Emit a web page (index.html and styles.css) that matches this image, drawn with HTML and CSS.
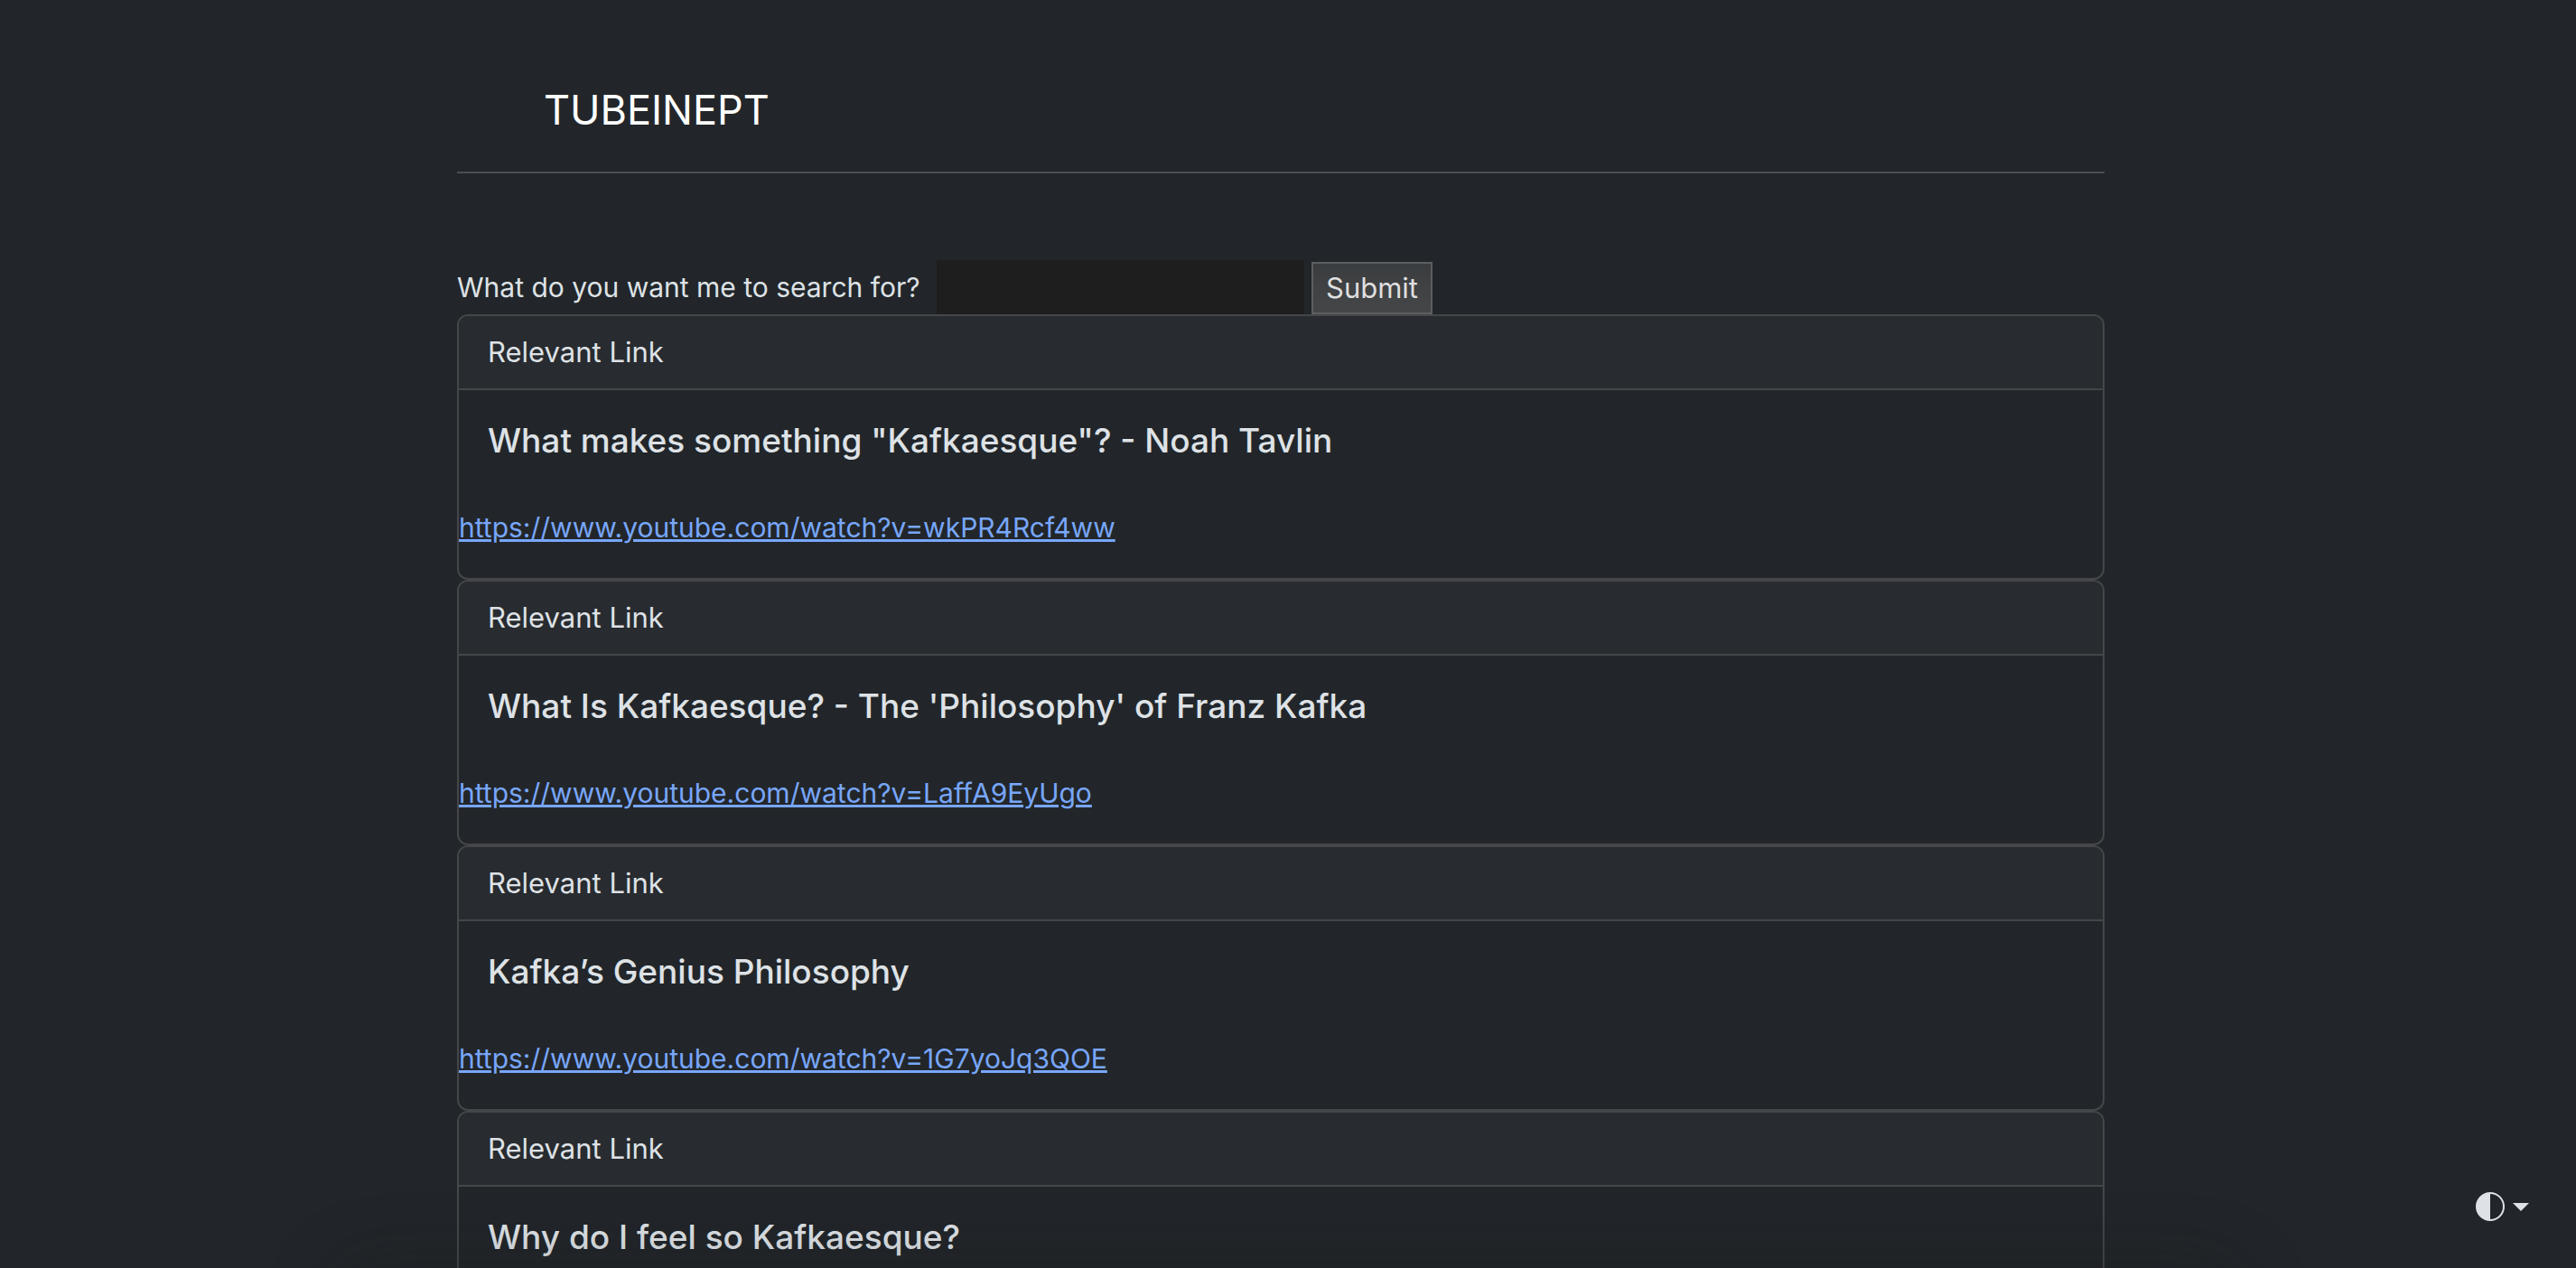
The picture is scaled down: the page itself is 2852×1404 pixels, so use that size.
FILE: index.html
```
<!DOCTYPE html>
<html lang="en" data-bs-theme="dark">
  <head>
    <meta charset="UTF-8" />
    <meta name="viewport" content="width=device-width, initial-scale=1" />
    <title>Tubeinept</title>
    <link rel="stylesheet" href="styles.css">
  </head>
  <body>
    <div class="theme-toggle">
      <button type="button" class="theme-button" aria-label="Toggle theme">
        <svg class="theme-icon" viewBox="0 0 16 16" fill="currentColor" aria-hidden="true">
          <path d="M8 15A7 7 0 1 0 8 1v14zm0 1A8 8 0 1 1 8 0a8 8 0 0 1 0 16z" />
        </svg>
        <span class="caret"></span>
      </button>
    </div>

    <div class="wrapper">
      <header class="site-header">
        <a class="brand" href="/">TUBEINEPT</a>
      </header>

      <main>
        <form class="search" action="/" method="post">
          <label for="query">What do you want me to search for?</label>
          <input type="text" id="query" name="query" />
          <button type="submit">Submit</button>
        </form>

        <div class="card">
          <div class="card-header">Relevant Link</div>
          <div class="card-body">
            <h5 class="card-title">What makes something "Kafkaesque"? - Noah Tavlin</h5>
          </div>
          <p><a href="https://www.youtube.com/watch?v=wkPR4Rcf4ww">https://www.youtube.com/watch?v=wkPR4Rcf4ww</a></p>
        </div>

        <div class="card">
          <div class="card-header">Relevant Link</div>
          <div class="card-body">
            <h5 class="card-title">What Is Kafkaesque? - The 'Philosophy' of Franz Kafka</h5>
          </div>
          <p><a href="https://www.youtube.com/watch?v=LaffA9EyUgo">https://www.youtube.com/watch?v=LaffA9EyUgo</a></p>
        </div>

        <div class="card">
          <div class="card-header">Relevant Link</div>
          <div class="card-body">
            <h5 class="card-title">Kafka’s Genius Philosophy</h5>
          </div>
          <p><a href="https://www.youtube.com/watch?v=1G7yoJq3QOE">https://www.youtube.com/watch?v=1G7yoJq3QOE</a></p>
        </div>

        <div class="card">
          <div class="card-header">Relevant Link</div>
          <div class="card-body">
            <h5 class="card-title">Why do I feel so Kafkaesque?</h5>
          </div>
        </div>
      </main>
    </div>

    <div class="bottom-shadow"></div>
  </body>
</html>
```
FILE: styles.css
```
* {
  box-sizing: border-box;
}
body {
  margin: 0;
  padding-right: 16px;
  height: 100vh;
  overflow: hidden;
  background: #22262a;
  color: #dee2e6;
  font-family: Inter, "Liberation Sans", sans-serif;
  font-size: 31px;
  line-height: 48px;
}
.wrapper {
  width: 66%;
  max-width: 1824px;
  margin: 0 auto;
  padding-top: 86px;
}
.site-header {
  margin-bottom: 96px;
  padding: 0 0 32px 96px;
  border-bottom: 2px solid #495057;
}
.brand {
  display: block;
  color: #fff;
  font-size: 45px;
  line-height: 72px;
  text-decoration: none;
}
.search {
  display: flex;
  align-items: flex-end;
  gap: 8px;
  height: 60px;
}
.search label {
  width: 523px;
  padding-bottom: 6px;
  font-size: 30px;
  white-space: nowrap;
}
.search input {
  width: 407px;
  height: 60px;
  padding: 2px 4px;
  border: 0;
  background: #1e1e1e;
  color: #fff;
  font: inherit;
}
.search button {
  height: 58px;
  padding: 0 14px;
  border: 2px solid #5c5e60;
  background: linear-gradient(#3a3d3f, #454648);
  color: #dfdfdf;
  font: inherit;
}
.card {
  border: 2px solid #444649;
  border-radius: 12px;
}
.card-header {
  padding: 16px 32px;
  border-bottom: 2px solid #444649;
  background: #282b2f;
  border-radius: 10px 10px 0 0;
}
.card-body {
  padding: 32px;
}
.card-title {
  margin: 0 0 16px;
  font-size: 37px;
  font-weight: 500;
  line-height: 48px;
}
.card p {
  margin: 0 0 32px;
  font-size: 30px;
}
.card a {
  color: #78a6fa;
}
.theme-toggle {
  position: fixed;
  right: 32px;
  bottom: 32px;
}
.theme-button {
  display: flex;
  align-items: center;
  gap: 9px;
  padding: 20px;
  border: 0;
  background: none;
  color: #dee2e6;
}
.theme-icon {
  width: 32px;
  height: 32px;
}
.caret {
  border-top: 9px solid;
  border-right: 9px solid transparent;
  border-left: 9px solid transparent;
}
.bottom-shadow {
  position: fixed;
  top: 100%;
  left: 13%;
  right: 13%;
  height: 80px;
  border-radius: 40px;
  box-shadow: 0 0 80px rgba(20, 20, 20, 0.3);
  pointer-events: none;
}
```
